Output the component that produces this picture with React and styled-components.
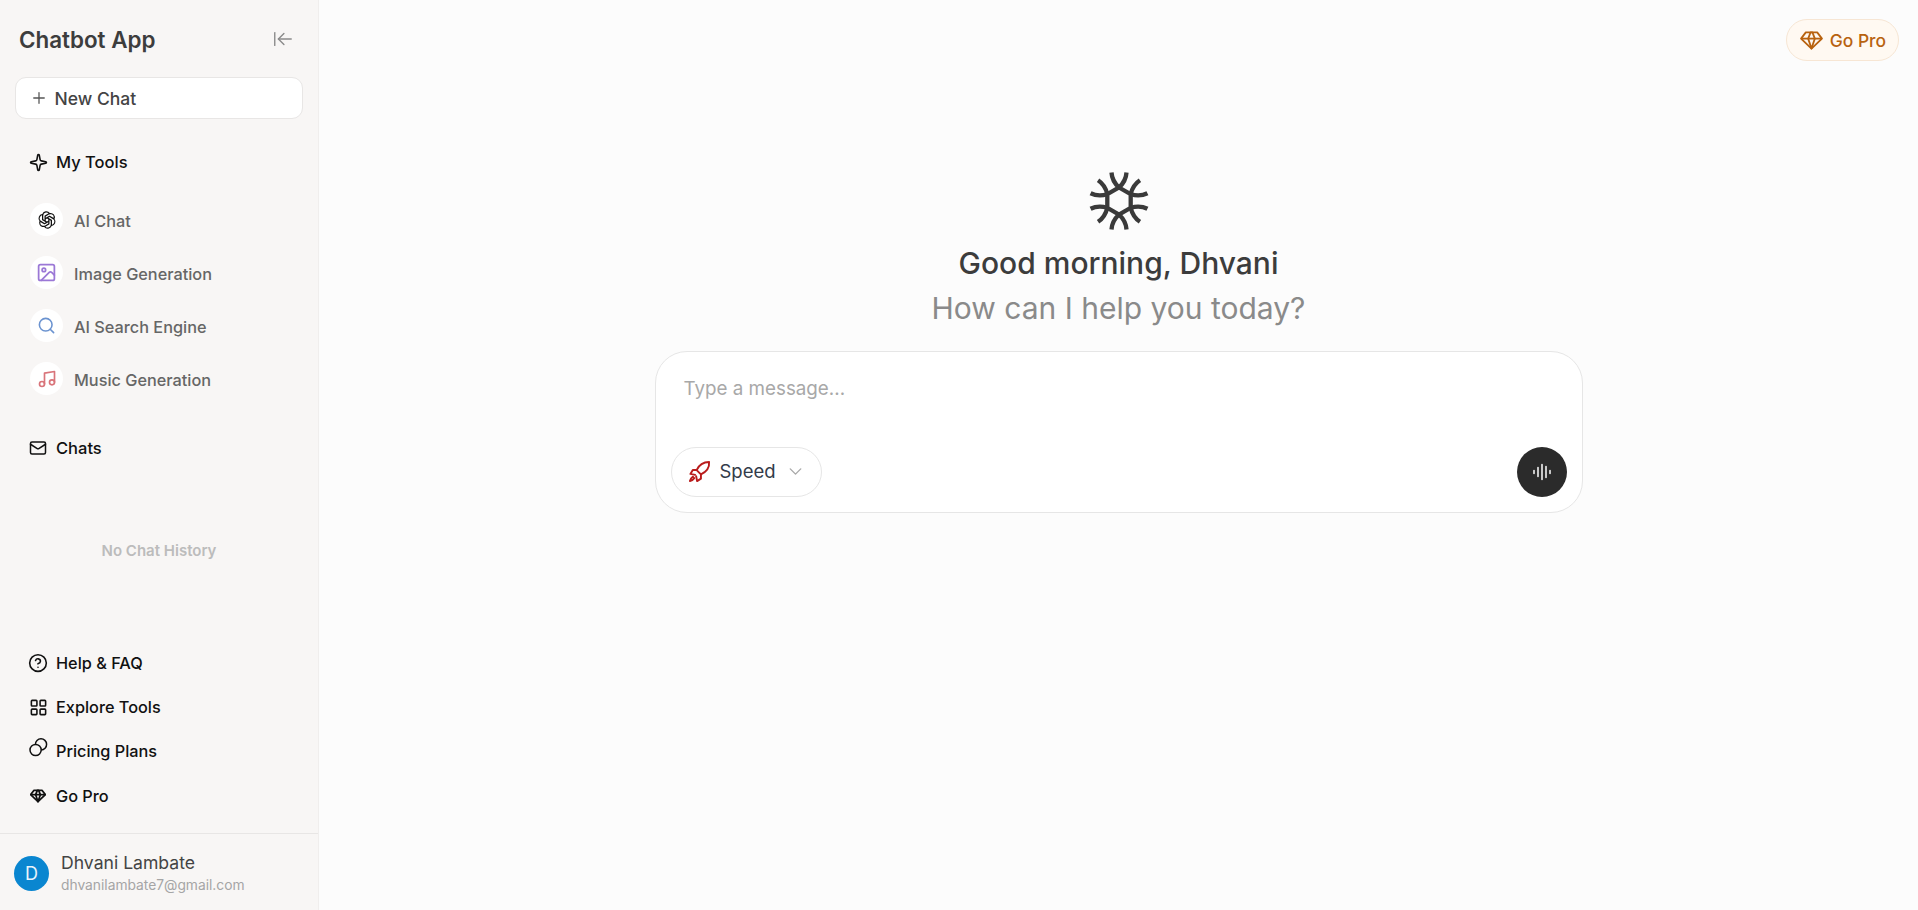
import React from 'react'
import styled, { createGlobalStyle } from 'styled-components'
import {
  ArrowLeftToLine, Plus, Sparkle, Image, Search, Music, Mail, CircleHelp,
  LayoutGrid, ChevronDown,
} from 'lucide-react'
import { PiOpenAiLogo } from 'react-icons/pi'

const GlobalStyle = createGlobalStyle`
  html, body { margin: 0; padding: 0; height: 100%; }
  body { font-family: Inter, "Noto Sans", sans-serif; background: #fcfcfc; }
  #root { height: 100%; }
  * { box-sizing: border-box; }
`

function GemIcon({ width, height, color, weight }) {
  return (
    <svg width={width} height={height} viewBox="0 0 24 20" fill="none" stroke={color} strokeWidth={weight} strokeLinejoin="round">
      <path d="M6 1.5h12l5 6.5-11 10.5L1 8Z" />
      <path d="M1 8h22" />
      <path d="M8.5 8 12 18.5 15.5 8l-2.5-6.5h-2Z" />
    </svg>
  )
}

function OrbsIcon({ size, color, strokeWidth }) {
  return (
    <svg width={size} height={size} viewBox="0 0 20 20" fill="none" stroke={color} strokeWidth={strokeWidth}>
      <circle cx="7.6" cy="12" r="5.6" />
      <path d="M7.4 6.4A5.6 5.6 0 1 1 13.2 12" />
    </svg>
  )
}

function RocketIcon() {
  return (
    <svg width="23" height="23" viewBox="0 0 24 24" fill="none" stroke="#b91c1c" strokeWidth="2" strokeLinejoin="round" strokeLinecap="round">
      <path d="M22 2c-5.500 0-10.500 3-13 8.500l4.500 4.500c5.500-2.500 9-7.500 8.500-13Z" />
      <path d="M9 10.500H5L2.500 14.500 7.500 15.500" />
      <path d="M13.500 15v4.500L9.500 22 8.500 17" />
      <path d="M5 17.500c-1.500 1-2.500 2.500-3 4.500 2-.5 3.500-1.500 4.500-3Z" />
    </svg>
  )
}

function SnowLogo() {
  return (
    <svg width="60" height="60" viewBox="-30 -30 60 60" fill="none" stroke="#3a3a3a" strokeWidth="4.300">
      <path d="M0 -13.500 L11.700 -6.750 L11.700 6.750 L0 13.500 L-11.700 6.750 L-11.700 -6.750 Z" />
      {[0, 60, 120, 180, 240, 300].map((a) => (
        <g key={a} transform={`rotate(${a})`}>
          <path d="M0 -13.500 Q-7 -20 -7.500 -28.500" />
          <path d="M0 -13.500 Q7 -20 7.500 -28.500" />
        </g>
      ))}
    </svg>
  )
}

function VoiceBars() {
  return (
    <svg width="20" height="20" viewBox="0 0 20 20" stroke="#f2f2f2" strokeWidth="1.600" strokeLinecap="round">
      <path d="M2 8.500v3M6 5.500v9M10 2.500v15M14 4.500v11M18 8.500v3" />
    </svg>
  )
}

const tools = [
  { label: 'AI Chat', Icon: PiOpenAiLogo, color: '#111111', size: 20 },
  { label: 'Image Generation', Icon: Image, color: '#9b78d6', size: 21 },
  { label: 'AI Search Engine', Icon: Search, color: '#6b93d0', size: 19 },
  { label: 'Music Generation', Icon: Music, color: '#d9747a', size: 20 },
]

const footerLinks = [
  { label: 'Help & FAQ', icon: <CircleHelp size={20} color="#111" strokeWidth={1.900} />, height: 44 },
  { label: 'Explore Tools', icon: <LayoutGrid size={19} color="#111" strokeWidth={2} />, height: 44 },
  { label: 'Pricing Plans', icon: <OrbsIcon size={20} color="#111" strokeWidth={1.500} />, height: 44, lift: true },
  { label: 'Go Pro', icon: <GemIcon width={16} height={14} color="#111" weight={2.600} />, height: 45 },
]

export default function App() {
  return (
    <>
      <GlobalStyle />
      <Page>
        <Sidebar>
          <TitleRow>
            <Title>Chatbot App</Title>
            <ArrowLeftToLine size={22} color="#8a8a8a" strokeWidth={1.500} />
          </TitleRow>
          <NewChat>
            <Plus size={18} color="#555" strokeWidth={1.700} />
            New Chat
          </NewChat>
          <SectionRow $top={33}>
            <IconSlot><Sparkle size={19} color="#111" strokeWidth={2} /></IconSlot>
            My Tools
          </SectionRow>
          <ToolList>
            {tools.map(({ label, Icon, color, size }) => (
              <ToolRow key={label}>
                <ToolCircle>
                  <Icon size={size} color={color} />
                </ToolCircle>
                <ToolLabel>{label}</ToolLabel>
              </ToolRow>
            ))}
          </ToolList>
          <SectionRow $top={43}>
            <IconSlot><Mail size={18} color="#111" strokeWidth={2} /></IconSlot>
            Chats
          </SectionRow>
          <EmptyHistory>No Chat History</EmptyHistory>
          <FooterLinks>
            {footerLinks.map(({ label, icon, height, lift }) => (
              <FooterLink key={label} $height={height}>
                <IconSlot $lift={lift}>{icon}</IconSlot>
                {label}
              </FooterLink>
            ))}
          </FooterLinks>
          <Profile>
            <Avatar>D</Avatar>
            <ProfileText>
              <ProfileName>Dhvani Lambate</ProfileName>
              <ProfileMail>dhvanilambate7@gmail.com</ProfileMail>
            </ProfileText>
          </Profile>
        </Sidebar>
        <Main>
          <TopBar>
            <ProButton>
              <GemIcon width={23} height={19} color="#b8620f" weight={1.900} />
              Go Pro
            </ProButton>
          </TopBar>
          <Hero>
            <SnowLogo />
            <Greeting>Good morning, Dhvani</Greeting>
            <Subtitle>How can I help you today?</Subtitle>
            <Composer>
              <Placeholder>Type a message...</Placeholder>
              <ComposerBar>
                <ModelPill>
                  <RocketIcon />
                  Speed
                  <ChevronDown size={21} color="#a8a8a8" strokeWidth={1.600} />
                </ModelPill>
                <VoiceButton>
                  <VoiceBars />
                </VoiceButton>
              </ComposerBar>
            </Composer>
          </Hero>
        </Main>
      </Page>
    </>
  )
}

const Page = styled.div`
  display: flex;
  height: 910px;
  overflow: hidden;
`
const Sidebar = styled.aside`
  width: 319px;
  flex: none;
  display: flex;
  flex-direction: column;
  background: #f8f6f5;
  border-right: 1px solid #f0eeed;
`
const TitleRow = styled.div`
  display: flex;
  align-items: center;
  justify-content: space-between;
  height: 77px;
  padding: 1px 24px 0 19px;
`
const Title = styled.div`
  font-size: 22.400px;
  font-weight: 600;
  color: #3d3d3d;
`
const NewChat = styled.div`
  display: flex;
  align-items: center;
  gap: 7px;
  height: 42px;
  margin: 0 15px 0 14.500px;
  padding: 0 15px 0 14px;
  background: #fff;
  border: 1px solid #e8e6e5;
  border-radius: 11px;
  font-size: 17.500px;
  font-weight: 500;
  color: #444;
`
const IconSlot = styled.span`
  display: flex;
  align-items: center;
  justify-content: center;
  width: 20px;
  height: 20px;
  transform: translateY(${(p) => (p.$lift ? -3 : 0)}px);
`
const SectionRow = styled.div`
  display: flex;
  align-items: center;
  gap: 8px;
  height: 20px;
  margin-top: ${(p) => p.$top}px;
  padding-left: 28px;
  font-size: 16.500px;
  font-weight: 500;
  color: #111;
`
const ToolList = styled.div`
  display: flex;
  flex-direction: column;
  gap: 20px;
  margin-top: 31px;
  padding-left: 30px;
`
const ToolRow = styled.div`
  display: flex;
  align-items: center;
  gap: 11px;
  height: 33px;
  font-size: 16.300px;
  font-weight: 500;
  color: #666;
`
const ToolLabel = styled.span`
  padding-top: 3px;
`
const ToolCircle = styled.div`
  display: flex;
  align-items: center;
  justify-content: center;
  width: 33px;
  height: 33px;
  border-radius: 50%;
  background: #fff;
`
const EmptyHistory = styled.div`
  flex: 1;
  display: flex;
  justify-content: center;
  padding-top: 83px;
  font-size: 15px;
  font-weight: 600;
  color: #bcbcbc;
`
const FooterLinks = styled.div`
  display: flex;
  flex-direction: column;
  padding: 0 0 15px 28px;
`
const FooterLink = styled.div`
  display: flex;
  align-items: center;
  gap: 8px;
  height: ${(p) => p.$height}px;
  font-size: 16.300px;
  font-weight: 500;
  color: #111;
`
const Profile = styled.div`
  display: flex;
  align-items: center;
  gap: 12px;
  height: 77px;
  padding: 2px 14px 0;
  border-top: 1px solid #e8e6e5;
`
const Avatar = styled.div`
  display: flex;
  align-items: center;
  justify-content: center;
  width: 35px;
  height: 35px;
  border-radius: 50%;
  background: #0a86d0;
  color: #e8f3fb;
  font-size: 18px;
`
const ProfileText = styled.div`
  display: flex;
  flex-direction: column;
  gap: 4px;
  margin-top: -2px;
`
const ProfileName = styled.div`
  font-size: 17.600px;
  color: #444;
`
const ProfileMail = styled.div`
  font-size: 13.800px;
  color: #a5a5a5;
`
const Main = styled.main`
  flex: 1;
  display: flex;
  flex-direction: column;
  background: #fcfcfc;
`
const TopBar = styled.div`
  display: flex;
  justify-content: flex-end;
  padding: 19px 19px 0 0;
`
const ProButton = styled.div`
  display: flex;
  align-items: center;
  gap: 7px;
  height: 42px;
  padding: 0 12px 0 13px;
  border: 1px solid #f7e6d4;
  border-radius: 21px;
  background: #fff9f2;
  font-size: 17.400px;
  font-weight: 500;
  color: #b8620f;
`
const Hero = styled.div`
  display: flex;
  flex-direction: column;
  align-items: center;
  padding-top: 110px;
`
const Greeting = styled.div`
  margin-top: 12px;
  font-size: 30px;
  font-weight: 500;
  line-height: 40px;
  color: #3c3c3c;
`
const Subtitle = styled.div`
  margin-top: 5px;
  font-size: 30px;
  line-height: 40px;
  color: #8a8a8a;
`
const Composer = styled.div`
  display: flex;
  flex-direction: column;
  justify-content: space-between;
  width: 928px;
  height: 162px;
  margin-top: 23px;
  padding: 24px 15px 15px;
  background: #fff;
  border: 1px solid #e6e6e6;
  border-radius: 32px;
`
const Placeholder = styled.div`
  padding-left: 13px;
  font-size: 18.800px;
  line-height: 26px;
  color: #a8a8a8;
`
const ComposerBar = styled.div`
  display: flex;
  align-items: center;
  justify-content: space-between;
`
const ModelPill = styled.div`
  display: flex;
  align-items: center;
  gap: 9px;
  height: 50px;
  padding: 0 15px 2px 16px;
  border: 1px solid #e6e6e6;
  border-radius: 25px;
  font-size: 18.500px;
  font-weight: 400;
  color: #333c4a;
`
const VoiceButton = styled.div`
  display: flex;
  align-items: center;
  justify-content: center;
  width: 50px;
  height: 50px;
  border-radius: 50%;
  background: #2b2b2b;
`
